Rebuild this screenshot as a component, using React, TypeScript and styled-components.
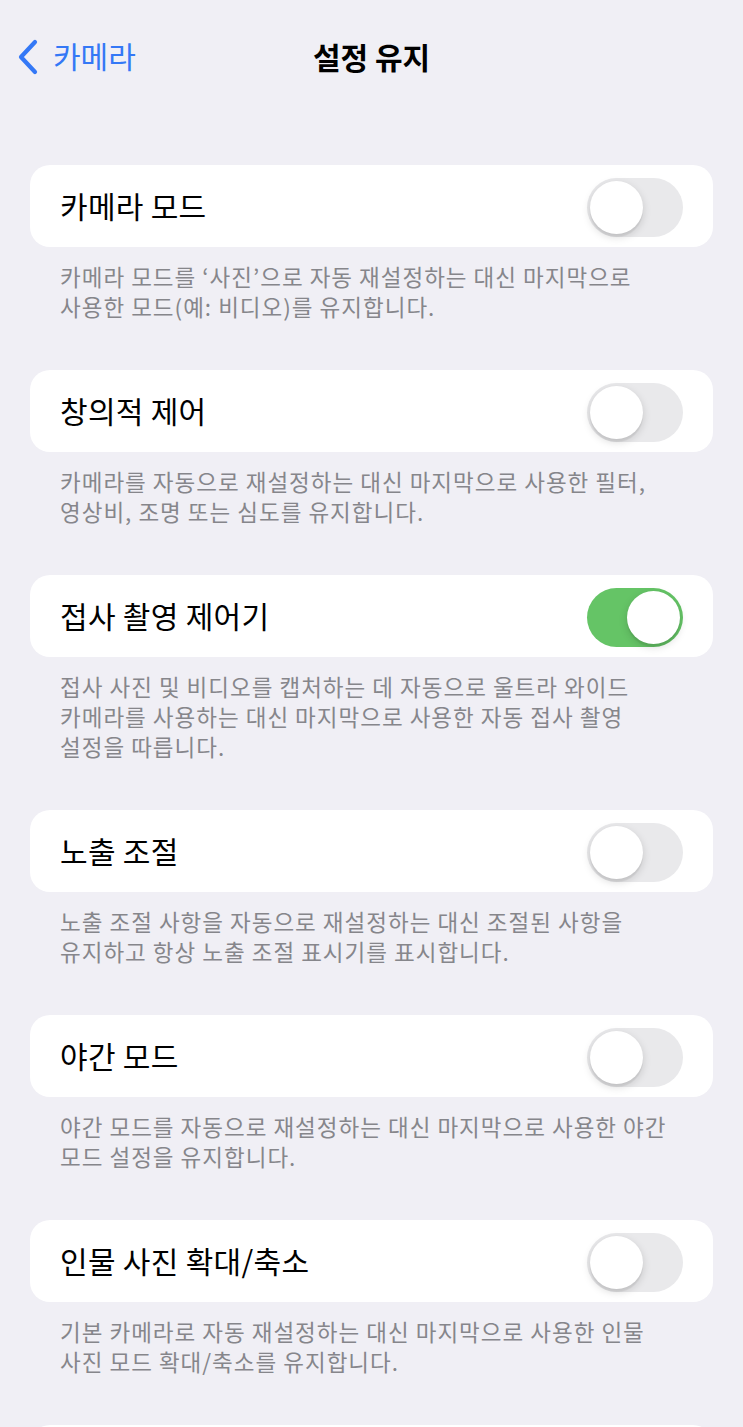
import React, { useState } from "react";
import styled, { createGlobalStyle } from "styled-components";

const GlobalStyle = createGlobalStyle`
  html, body {
    margin: 0;
    padding: 0;
    background: #f0eff5;
  }
  body {
    font-family: "Noto Sans CJK KR", "Noto Sans", "Liberation Sans", sans-serif;
    -webkit-font-smoothing: antialiased;
  }
`;

const Page = styled.div`
  width: 743px;
  min-height: 1427px;
  background: #f0eff5;
  overflow: hidden;
`;

const NavBar = styled.header`
  height: 114px;
  display: grid;
  grid-template-columns: 1fr auto 1fr;
  align-items: center;
`;

const BackButton = styled.button`
  justify-self: start;
  display: flex;
  align-items: center;
  gap: 13px;
  padding: 0 0 0 16px;
  border: none;
  background: none;
  color: #3478f6;
  font-family: inherit;
  font-size: 30px;
  line-height: 1;
  cursor: pointer;
`;

const BackLabel = styled.span`
  padding-bottom: 4px;
`;

const Title = styled.h1`
  margin: 0;
  padding-bottom: 2px;
  font-size: 30px;
  line-height: 1;
  font-weight: 700;
  color: #000;
`;

const Content = styled.main`
  padding: 51px 30px 0;
`;

const Section = styled.section`
  margin-bottom: 49px;
`;

const Card = styled.div`
  height: 82px;
  background: #fff;
  border-radius: 20px;
  display: flex;
  align-items: center;
  justify-content: space-between;
  padding: 0 30px;
  box-sizing: border-box;
`;

const Label = styled.span`
  font-size: 30px;
  line-height: 1;
  padding-bottom: 2px;
  letter-spacing: 0.3px;
  color: #000;
`;

const Track = styled.button<{ $on: boolean }>`
  display: flex;
  align-items: center;
  justify-content: ${(p) => (p.$on ? "flex-end" : "flex-start")};
  width: 96px;
  height: 59px;
  box-sizing: border-box;
  border-radius: 30px;
  border: none;
  padding: 0 3px;
  margin-top: 2px;
  background: ${(p) => (p.$on ? "#65c466" : "#e9e9eb")};
  cursor: pointer;
  transition: background 0.2s;
`;

const Knob = styled.span`
  width: 53px;
  height: 53px;
  border-radius: 50%;
  background: #fff;
  box-shadow: 0 3px 8px rgba(0, 0, 0, 0.15), 0 3px 1px rgba(0, 0, 0, 0.06);
`;

const Footer = styled.p`
  margin: 0;
  padding: 14px 30px 0;
  font-size: 22.5px;
  letter-spacing: 1px;
  line-height: 30px;
  color: #86868b;
`;

const Line = styled.span`
  display: block;
  white-space: nowrap;
`;

type Item = { label: string; on: boolean; lines: string[] };

const items: Item[] = [
  {
    label: "카메라 모드",
    on: false,
    lines: [
      "카메라 모드를 ‘사진’으로 자동 재설정하는 대신 마지막으로",
      "사용한 모드(예: 비디오)를 유지합니다.",
    ],
  },
  {
    label: "창의적 제어",
    on: false,
    lines: [
      "카메라를 자동으로 재설정하는 대신 마지막으로 사용한 필터,",
      "영상비, 조명 또는 심도를 유지합니다.",
    ],
  },
  {
    label: "접사 촬영 제어기",
    on: true,
    lines: [
      "접사 사진 및 비디오를 캡처하는 데 자동으로 울트라 와이드",
      "카메라를 사용하는 대신 마지막으로 사용한 자동 접사 촬영",
      "설정을 따릅니다.",
    ],
  },
  {
    label: "노출 조절",
    on: false,
    lines: [
      "노출 조절 사항을 자동으로 재설정하는 대신 조절된 사항을",
      "유지하고 항상 노출 조절 표시기를 표시합니다.",
    ],
  },
  {
    label: "야간 모드",
    on: false,
    lines: [
      "야간 모드를 자동으로 재설정하는 대신 마지막으로 사용한 야간",
      "모드 설정을 유지합니다.",
    ],
  },
  {
    label: "인물 사진 확대/축소",
    on: false,
    lines: [
      "기본 카메라로 자동 재설정하는 대신 마지막으로 사용한 인물",
      "사진 모드 확대/축소를 유지합니다.",
    ],
  },
];

const Toggle: React.FC<{ initial: boolean }> = ({ initial }) => {
  const [on, setOn] = useState(initial);
  return (
    <Track $on={on} onClick={() => setOn(!on)} aria-pressed={on}>
      <Knob />
    </Track>
  );
};

const Chevron = () => (
  <svg width="24" height="36" viewBox="0 0 24 36" fill="none">
    <path
      d="M19 3 L5 18 L19 33"
      stroke="#3478f6"
      strokeWidth="4.2"
      strokeLinecap="round"
      strokeLinejoin="round"
    />
  </svg>
);

export default function App() {
  return (
    <Page>
      <GlobalStyle />
      <NavBar>
        <BackButton>
          <Chevron />
          <BackLabel>카메라</BackLabel>
        </BackButton>
        <Title>설정 유지</Title>
        <div />
      </NavBar>
      <Content>
        {items.map((it) => (
          <Section key={it.label}>
            <Card>
              <Label>{it.label}</Label>
              <Toggle initial={it.on} />
            </Card>
            <Footer>
              {it.lines.map((l) => (
                <Line key={l}>{l}</Line>
              ))}
            </Footer>
          </Section>
        ))}
        <Card />
      </Content>
    </Page>
  );
}
